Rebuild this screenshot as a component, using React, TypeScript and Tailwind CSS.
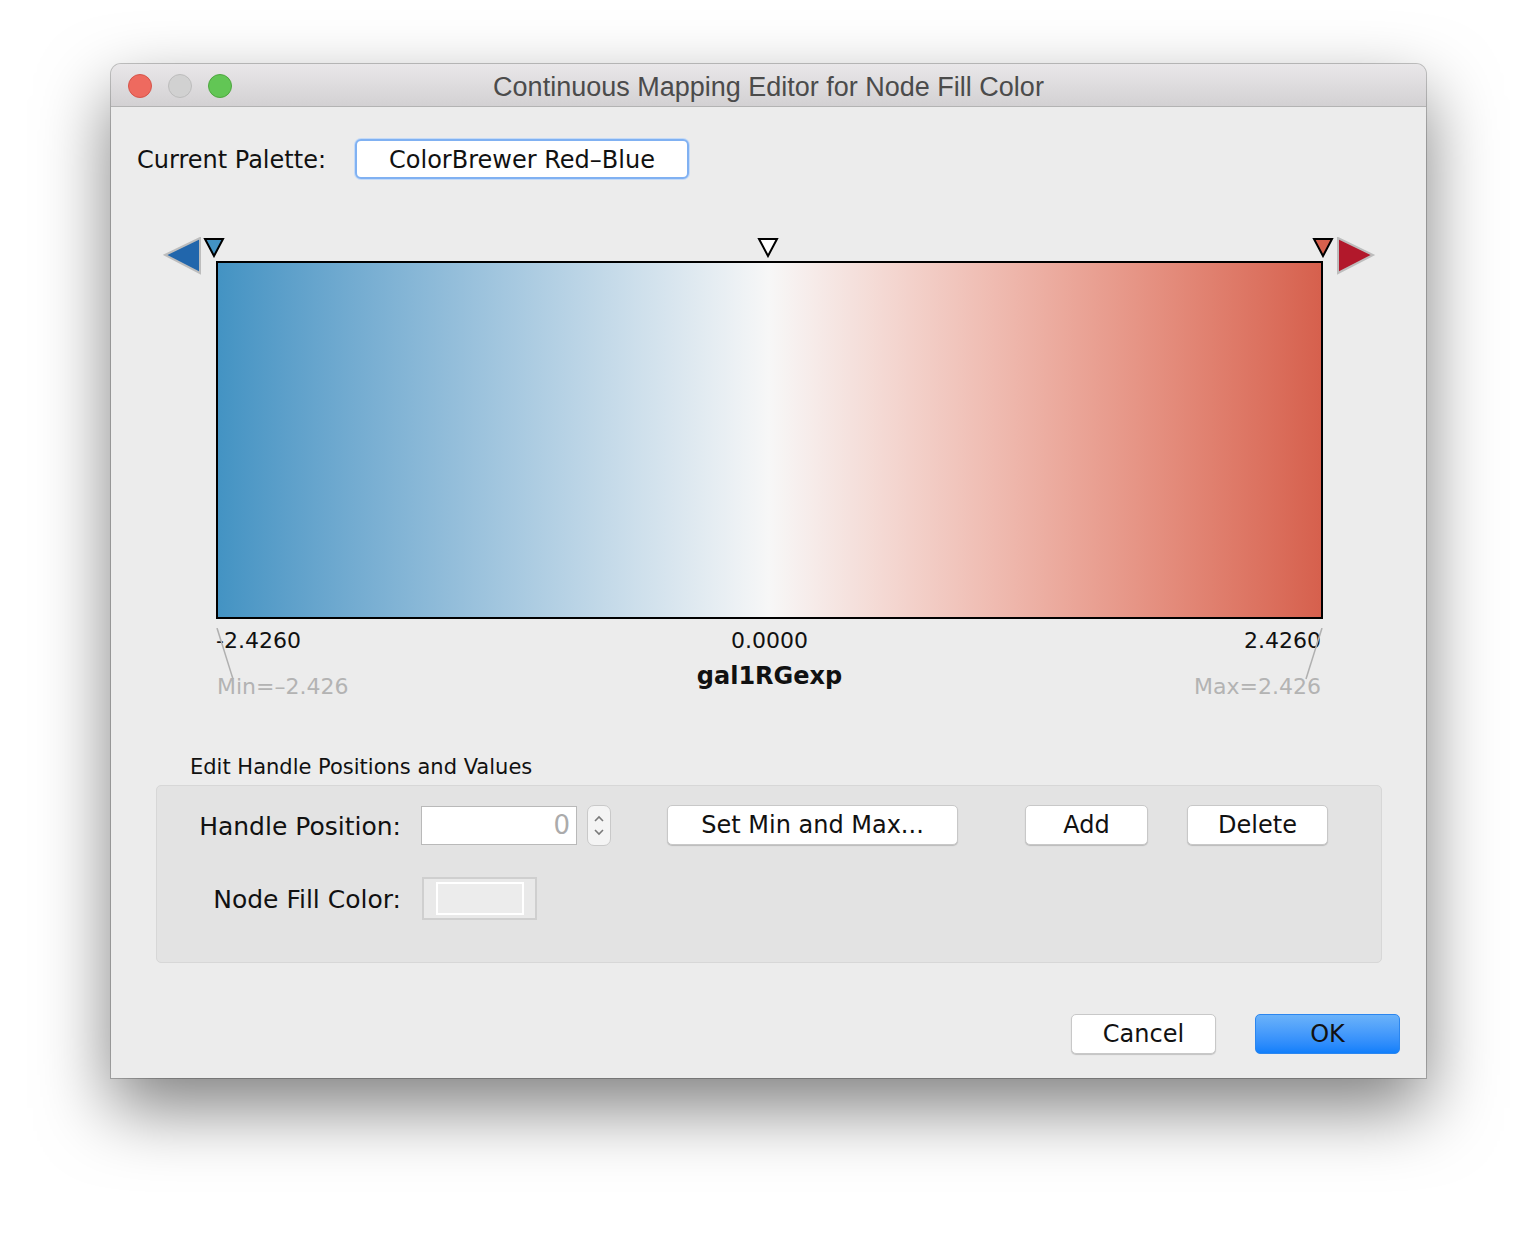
import React from "react";

// Small handle markers sitting on top of the gradient bar
function Handle({ fill }: { fill: string }) {
  return (
    <svg width="22" height="21" viewBox="0 0 22 21">
      <polygon points="2,2 20,2 11,19" fill={fill} stroke="#000" strokeWidth="2" strokeLinejoin="miter" />
    </svg>
  );
}

function TrafficLights() {
  return (
    <div className="flex items-center gap-[16px] pl-[17px]">
      <div className="w-[24px] h-[24px] rounded-full bg-[#ee6a5f] border border-[#d5544a]" />
      <div className="w-[24px] h-[24px] rounded-full bg-[#d1d1d1] border border-[#bcbcbc]" />
      <div className="w-[24px] h-[24px] rounded-full bg-[#62c655] border border-[#4ea63f]" />
    </div>
  );
}

function MacButton({ label, className }: { label: string; className: string }) {
  return (
    <button
      className={`${className} h-[40px] rounded-[5px] bg-white border border-[#c8c8c8] shadow-[0_1px_1px_rgba(0,0,0,0.18)] text-[24px] leading-none text-[#111] flex items-center justify-center`}
    >
      {label}
    </button>
  );
}

export default function App() {
  return (
    <div className="min-h-[1238px] w-full bg-white pt-[64px] pl-[111px]">
      <div className="w-[1315px] h-[1014px] rounded-t-[10px] bg-[#ececec] flex flex-col overflow-hidden shadow-[0_0_0_1px_rgba(0,0,0,0.22),0_30px_70px_rgba(0,0,0,0.5)]">
        {/* title bar */}
        <div className="h-[43px] shrink-0 grid grid-cols-[1fr_auto_1fr] items-center bg-gradient-to-b from-[#e9e7e9] to-[#d3d1d3] border-b border-[#b3b3b3]">
          <div className="pt-[1px]">
            <TrafficLights />
          </div>
          <div className="pt-[4px] font-['Liberation_Sans',Arial,sans-serif] text-[27px] text-[#4b4b4b] leading-none">
            Continuous Mapping Editor for Node Fill Color
          </div>
          <div />
        </div>

        <div className="flex-1 flex flex-col font-['DejaVu_Sans',sans-serif] text-[#111]">
          {/* palette row */}
          <div className="mt-[32px] pl-[26px] flex items-center h-[40px]">
            <div className="w-[218px] shrink-0 text-[24px] leading-none pt-[2px]">Current Palette:</div>
            <div className="w-[334px] h-[40px] rounded-[6px] bg-white border-2 border-[#80b1f2] shadow-[0_0_0_1px_#c4daf7] flex items-center justify-center text-[24px] leading-none pt-[2px]">
              ColorBrewer Red–Blue
            </div>
          </div>

          {/* gradient editor */}
          <div className="relative mt-[58px] ml-[52px] w-[1213px] pl-[53px]">
            <svg className="absolute left-0 top-0" width="40" height="38" viewBox="0 0 40 38">
              <polygon points="37,1 37,36 2,18" fill="#2166ac" stroke="#bdbdbd" strokeWidth="2" />
            </svg>
            <svg className="absolute right-0 top-0" width="40" height="38" viewBox="0 0 40 38">
              <polygon points="2,1 2,36 37,18" fill="#b2182b" stroke="#bdbdbd" strokeWidth="2" />
            </svg>
            <div className="absolute left-[40px] top-0">
              <Handle fill="#4393c3" />
            </div>
            <div className="absolute left-[594px] top-0">
              <Handle fill="#ffffff" />
            </div>
            <div className="absolute left-[1149px] top-0">
              <Handle fill="#d6604d" />
            </div>

            <div className="mt-[24px] w-[1107px] h-[358px] border-2 border-black bg-gradient-to-r from-[#4393c3] via-[#f7f7f7] to-[#d6604d]" />

            <div className="relative w-[1107px]">
              <svg className="absolute left-0 top-0" width="1107" height="52" viewBox="0 0 1107 52">
                <line x1="1" y1="0" x2="17" y2="51" stroke="#b0b0b0" strokeWidth="1.5" />
                <line x1="1106" y1="0" x2="1090" y2="51" stroke="#b0b0b0" strokeWidth="1.5" />
              </svg>
              <div className="grid grid-cols-3 mt-[9px] text-[22px] leading-[26px]">
                <div>-2.4260</div>
                <div className="text-center">0.0000</div>
                <div className="text-right pr-[2px]">2.4260</div>
              </div>
              <div className="grid grid-cols-3 mt-[9px] items-start">
                <div className="pt-[11px] text-[22px] leading-[26px] text-[#b3b3b3] pl-[1px]">Min=–2.426</div>
                <div className="text-center font-bold text-[24px] leading-[26px]">gal1RGexp</div>
                <div className="pt-[11px] text-[22px] leading-[26px] text-[#b3b3b3] text-right pr-[2px]">Max=2.426</div>
              </div>
            </div>
          </div>

          {/* handle editing */}
          <div className="mt-[54px] pl-[79px] text-[21px] leading-[26px]">Edit Handle Positions and Values</div>

          <div className="mt-[5px] ml-[45px] w-[1226px] h-[178px] rounded-[5px] bg-[#e3e3e3] border border-[#d7d7d7] flex flex-col">
            <div className="mt-[18px] h-[42px] flex items-center">
              <div className="w-[244px] shrink-0 text-right text-[25px] leading-none pt-[2px]">Handle Position:</div>
              <div className="ml-[20px] w-[156px] h-[39px] bg-white border border-[#b9b9b9] flex items-center justify-end pr-[6px] text-[26px] leading-none text-[#ababab]">
                0
              </div>
              <div className="ml-[10px] w-[24px] h-[41px] rounded-[7px] bg-[#f4f4f4] border border-[#c9c9c9] flex flex-col items-center justify-center gap-[5px]">
                <svg width="12" height="8" viewBox="0 0 12 8">
                  <polyline points="2,6 6,2 10,6" fill="none" stroke="#7a7a7a" strokeWidth="1.6" />
                </svg>
                <svg width="12" height="8" viewBox="0 0 12 8">
                  <polyline points="2,2 6,6 10,2" fill="none" stroke="#7a7a7a" strokeWidth="1.6" />
                </svg>
              </div>
              <MacButton label="Set Min and Max..." className="ml-[56px] w-[291px]" />
              <MacButton label="Add" className="ml-[67px] w-[123px]" />
              <MacButton label="Delete" className="ml-[39px] w-[141px]" />
            </div>
            <div className="mt-[31px] h-[43px] flex items-center">
              <div className="w-[244px] shrink-0 text-right text-[25px] leading-none pt-[2px]">Node Fill Color:</div>
              <div className="ml-[21px] w-[115px] h-[43px] border-2 border-[#cfcfcf] bg-[#e9e9e9] pl-[12px] pt-[3px]">
                <div className="w-[88px] h-[33px] border-2 border-white bg-[#ececec]" />
              </div>
            </div>
          </div>

          {/* dialog buttons */}
          <div className="mt-[51px] flex justify-end pr-[26px] gap-[39px]">
            <MacButton label="Cancel" className="w-[145px]" />
            <button className="w-[145px] h-[40px] rounded-[5px] bg-gradient-to-b from-[#6ab2fa] to-[#0f7ffb] border border-[#2b86ef] text-[24px] leading-none text-[#111] flex items-center justify-center">
              OK
            </button>
          </div>
        </div>
      </div>
    </div>
  );
}
